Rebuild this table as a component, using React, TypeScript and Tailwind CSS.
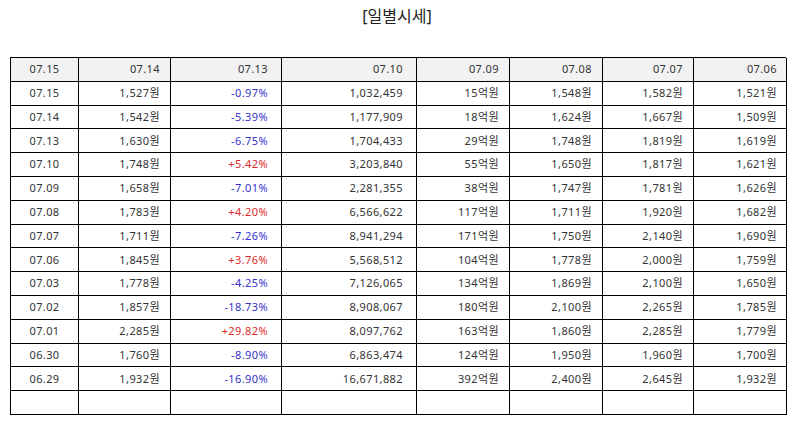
import React from "react";

const header = ["07.15", "07.14", "07.13", "07.10", "07.09", "07.08", "07.07", "07.06"];
const rows: string[][] = [
  ["07.15", "1,527원", "-0.97%", "1,032,459", "15억원", "1,548원", "1,582원", "1,521원"],
  ["07.14", "1,542원", "-5.39%", "1,177,909", "18억원", "1,624원", "1,667원", "1,509원"],
  ["07.13", "1,630원", "-6.75%", "1,704,433", "29억원", "1,748원", "1,819원", "1,619원"],
  ["07.10", "1,748원", "+5.42%", "3,203,840", "55억원", "1,650원", "1,817원", "1,621원"],
  ["07.09", "1,658원", "-7.01%", "2,281,355", "38억원", "1,747원", "1,781원", "1,626원"],
  ["07.08", "1,783원", "+4.20%", "6,566,622", "117억원", "1,711원", "1,920원", "1,682원"],
  ["07.07", "1,711원", "-7.26%", "8,941,294", "171억원", "1,750원", "2,140원", "1,690원"],
  ["07.06", "1,845원", "+3.76%", "5,568,512", "104억원", "1,778원", "2,000원", "1,759원"],
  ["07.03", "1,778원", "-4.25%", "7,126,065", "134억원", "1,869원", "2,100원", "1,650원"],
  ["07.02", "1,857원", "-18.73%", "8,908,067", "180억원", "2,100원", "2,265원", "1,785원"],
  ["07.01", "2,285원", "+29.82%", "8,097,762", "163억원", "1,860원", "2,285원", "1,779원"],
  ["06.30", "1,760원", "-8.90%", "6,863,474", "124억원", "1,950원", "1,960원", "1,700원"],
  ["06.29", "1,932원", "-16.90%", "16,671,882", "392억원", "2,400원", "2,645원", "1,932원"],
  ["", "", "", "", "", "", "", ""],
];

const padCls = [
  "justify-center",
  "justify-end pr-[10px]",
  "justify-end pr-[13px]",
  "justify-end pr-[13px]",
  "justify-end pr-[10px]",
  "justify-end pr-[10px]",
  "justify-end pr-[10px]",
  "justify-end pr-[9px]",
];

function colorFor(col: number, v: string) {
  if (col !== 2) return "text-[#333333]";
  if (v.startsWith("+")) return "text-[#e02a2a]";
  if (v.startsWith("-")) return "text-[#3333cc]";
  return "text-[#333333]";
}

export default function App() {
  return (
    <div
      className="w-[794px] h-[425px] bg-white"
      style={{ fontFamily: '"Noto Sans", "Noto Sans CJK KR", sans-serif' }}
    >
      <div className="h-[57px] pt-[5px] text-center text-[16px] leading-[22px] text-[#222222]">
        [일별시세]
      </div>
      <div className="ml-[10px] w-[776px] grid grid-cols-[68px_92px_111px_135px_93px_93px_91px_93px] border-l border-t border-black text-[11px] tracking-[0.4px]">
        {header.map((h, i) => (
          <div
            key={"h" + i}
            className={`h-[23.8px] flex items-center border-r border-b border-black bg-[#f2f2f2] text-[#333333] ${padCls[i]}`}
          >
            {h}
          </div>
        ))}
        {rows.map((r, ri) =>
          r.map((c, ci) => (
            <div
              key={ri + "-" + ci}
              className={`h-[23.8px] flex items-center border-r border-b border-black ${padCls[ci]} ${colorFor(ci, c)}`}
            >
              {c}
            </div>
          ))
        )}
      </div>
    </div>
  );
}
